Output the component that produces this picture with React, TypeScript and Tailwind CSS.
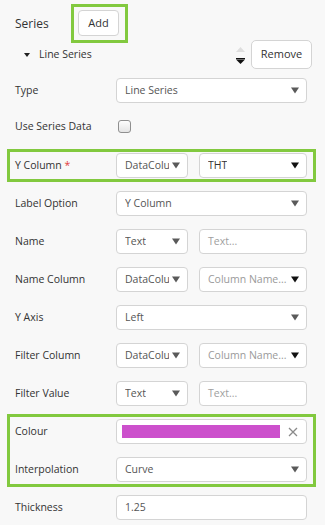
import React from 'react';

const Arrow: React.FC<{ dark?: boolean }> = ({ dark }) => (
    <svg width="8" height="7" viewBox="0 0 8 7" className="shrink-0 ml-[3px]">
        <path d="M0 0.5 H8 L4 6.5 Z" fill={dark ? '#111111' : '#5a5a5a'} />
    </svg>
);

const Select: React.FC<{ value: string; placeholder?: boolean; dark?: boolean; className?: string }> = ({
    value,
    placeholder,
    dark,
    className = 'flex-1',
}) => (
    <div
        className={`${className} h-[25px] flex items-center justify-between bg-white border border-[#d4d4d4] rounded-[4px] pl-[8px] pr-[7px] min-w-0`}
    >
        <span
            className={`overflow-hidden whitespace-nowrap ${placeholder ? 'text-[#9a9a9a]' : dark ? 'text-[#333]' : 'text-[#555]'}`}
        >
            {value}
        </span>
        <Arrow dark={dark} />
    </div>
);

const Input: React.FC<{ value: string; placeholder?: boolean; className?: string }> = ({
    value,
    placeholder,
    className = 'flex-1',
}) => (
    <div
        className={`${className} h-[25px] flex items-center bg-white border border-[#d4d4d4] rounded-[4px] pl-[8px] min-w-0`}
    >
        <span className={placeholder ? 'text-[#a0a0a0]' : 'text-[#555]'}>{value}</span>
    </div>
);

const Row: React.FC<{ label: React.ReactNode; children: React.ReactNode; className?: string }> = ({
    label,
    children,
    className = 'pl-[8px] pr-[9px]',
}) => (
    <div className={`flex items-center h-[25px] ${className}`}>
        <div className="w-[101px] shrink-0 text-[#333]">{label}</div>
        <div className="flex-1 flex gap-[11px] min-w-0">{children}</div>
    </div>
);

const App: React.FC = () => {
    return (
        <div
            className="w-[325px] h-[525px] overflow-hidden bg-[#f8f8f8] text-[10.5px] pl-[7px] pr-[9px]"
            style={{ fontFamily: '"Open Sans", "Noto Sans", sans-serif' }}
        >
            {/* Header */}
            <div className="flex items-center pt-[4px] pl-[8px]">
                <span className="w-[56px] text-[12px] text-[#333]">Series</span>
                <div className="border-[3px] border-[#82c93f] pt-[3px] pl-[4px] pr-[6px] pb-[4px]">
                    <button className="w-[41px] h-[26px] bg-white border border-[#d4d4d4] rounded-[4px] text-[#333] text-[11px]">
                        Add
                    </button>
                </div>
            </div>

            {/* Line Series */}
            <div className="flex items-center h-[29px] mt-[-3px] pl-[17px]">
                <svg width="6" height="4" viewBox="0 0 6 4">
                    <path d="M0 0 H6 L3 4 Z" fill="#222" />
                </svg>
                <span className="ml-[9px] flex-1 text-[#333]">Line Series</span>
                <div className="flex flex-col items-center gap-[6px] mr-[6px] mt-[2px]">
                    <svg width="9" height="5" viewBox="0 0 9 5">
                        <path d="M0 5 L4.5 0 L9 5 Z" fill="#dedede" />
                    </svg>
                    <svg width="9" height="6" viewBox="0 0 9 6">
                        <rect x="0" y="0" width="9" height="1.2" fill="#111" />
                        <path d="M0 1.5 H9 L4.5 6 Z" fill="#111" />
                    </svg>
                </div>
                <button className="w-[61px] h-[29px] bg-white border border-[#d4d4d4] rounded-[5px] text-[#333] text-[11px] mr-[4px]">
                    Remove
                </button>
            </div>

            <div className="mt-[9px]">
                <Row label="Type">
                    <Select value="Line Series" />
                </Row>
            </div>

            <div className="mt-[11px]">
                <Row label="Use Series Data">
                    <div className="ml-[2px] w-[13px] h-[13px] rounded-[3px] border border-[#8f8f8f] bg-gradient-to-b from-[#fdfdfd] to-[#e4e4e4]" />
                </Row>
            </div>

            <div className="mt-[10px] border-[3px] border-[#82c93f] py-[1px]">
                <Row label={<>Y Column <span className="text-[#e23b3b]">*</span></>} className="pl-[5px] pr-[6px]">
                    <Select value="DataColu" className="w-[72px] shrink-0" />
                    <Select value="THT" dark />
                </Row>
            </div>

            <div className="mt-[9px] flex flex-col gap-[13px]">
                <Row label="Label Option">
                    <Select value="Y Column" />
                </Row>
                <Row label="Name">
                    <Select value="Text" className="w-[72px] shrink-0" />
                    <Input value="Text..." placeholder />
                </Row>
                <Row label="Name Column">
                    <Select value="DataColu" className="w-[72px] shrink-0" />
                    <Select value="Column Name..." placeholder dark />
                </Row>
                <Row label="Y Axis">
                    <Select value="Left" />
                </Row>
                <Row label="Filter Column">
                    <Select value="DataColu" className="w-[72px] shrink-0" />
                    <Select value="Column Name..." placeholder dark />
                </Row>
                <Row label="Filter Value">
                    <Select value="Text" className="w-[72px] shrink-0" />
                    <Input value="Text..." placeholder />
                </Row>
            </div>

            <div className="mt-[8px] border-[3px] border-[#82c93f] py-[2px] flex flex-col gap-[13px]">
                <Row label="Colour" className="pl-[5px] pr-[6px]">
                    <div className="flex-1 h-[25px] flex items-center bg-white border border-[#d4d4d4] rounded-[4px] pl-[5px] pr-[8px]">
                        <div className="flex-1 h-[13px] bg-[#cc50cc]" />
                        <svg width="10" height="10" viewBox="0 0 10 10" className="ml-[8px]">
                            <path d="M1 1 L9 9 M9 1 L1 9" stroke="#8a8a8a" strokeWidth="1.3" />
                        </svg>
                    </div>
                </Row>
                <Row label="Interpolation" className="pl-[5px] pr-[6px]">
                    <Select value="Curve" />
                </Row>
            </div>

            <div className="mt-[8px]">
                <Row label="Thickness">
                    <Input value="1.25" />
                </Row>
            </div>
        </div>
    );
};

export default App;
